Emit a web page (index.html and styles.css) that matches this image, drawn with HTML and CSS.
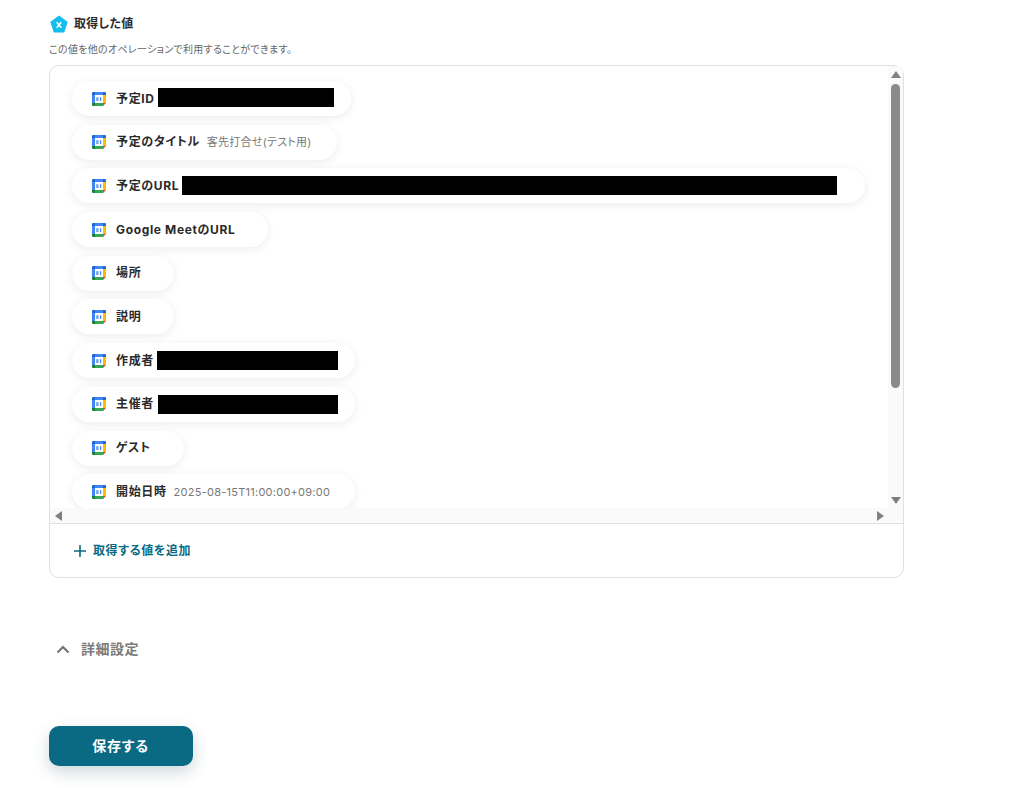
FILE: index.html
```html
<!DOCTYPE html>
<html lang="ja">
<head>
    <meta charset="UTF-8">
    <meta name="viewport" content="width=device-width, initial-scale=1.0">
    <title>取得した値</title>
    <link rel="stylesheet" href="styles.css">
</head>
<body>
    <svg class="icon-defs" width="0" height="0">
        <symbol id="gcal" viewBox="0 0 14 14">
            <rect x="3" y="3" width="8" height="8" fill="#fff"/>
            <path d="M3 0H1.200A1.200 1.200 0 0 0 0 1.200V3h3z" fill="#1967d2"/>
            <rect x="3" y="0" width="8" height="3" fill="#4285f4"/>
            <rect x="0" y="3" width="3" height="8" fill="#4285f4"/>
            <rect x="11" y="3" width="3" height="8" fill="#fbbc04"/>
            <rect x="3" y="11" width="8" height="3" fill="#34a853"/>
            <path d="M0 11v1.800A1.200 1.200 0 0 0 1.200 14H3v-3z" fill="#188038"/>
            <path d="M11 11v3l3-3z" fill="#ea4335"/>
            <path d="M11 0h1.800A1.200 1.200 0 0 1 14 1.200V3h-3z" fill="#1967d2"/>
            <rect x="4.200" y="5.200" width="2.300" height="3.800" fill="#6d9eeb"/>
            <rect x="8" y="5.200" width="1.200" height="3.800" fill="#4285f4"/>
        </symbol>
    </svg>

    <div class="page">
        <div class="heading">
            <svg class="heading-icon" width="18" height="18" viewBox="0 0 18 18">
                <path d="M9 .6 17.200 6.600a1 1 0 0 1 .3 1l-3 9.200a1 1 0 0 1-.9.6H4.400a1 1 0 0 1-.9-.6L.5 7.600a1 1 0 0 1 .3-1z" fill="#14bdeb"/>
                <path d="M6.700 7.300 11.300 12.700M11.300 7.300 6.700 12.700" stroke="#fff" stroke-width="1.500" fill="none"/>
            </svg>
            <span class="heading-text">取得した値</span>
        </div>
        <p class="subtext">この値を他のオペレーションで利用することができます。</p>

        <div class="card">
            <div class="scroll-box">
                <div class="scroll-row">
                    <div class="value-list">
                        <div class="pill">
                            <svg class="cal"><use href="#gcal"/></svg>
                            <span class="pill-label">予定ID</span>
                            <span class="mask mask-id"></span>
                        </div>
                        <div class="pill">
                            <svg class="cal"><use href="#gcal"/></svg>
                            <span class="pill-label">予定のタイトル</span>
                            <span class="pill-value">客先打合せ(テスト用)</span>
                        </div>
                        <div class="pill">
                            <svg class="cal"><use href="#gcal"/></svg>
                            <span class="pill-label">予定のURL</span>
                            <span class="mask mask-url"></span>
                        </div>
                        <div class="pill">
                            <svg class="cal"><use href="#gcal"/></svg>
                            <span class="pill-label">Google MeetのURL</span>
                        </div>
                        <div class="pill">
                            <svg class="cal"><use href="#gcal"/></svg>
                            <span class="pill-label">場所</span>
                        </div>
                        <div class="pill">
                            <svg class="cal"><use href="#gcal"/></svg>
                            <span class="pill-label">説明</span>
                        </div>
                        <div class="pill">
                            <svg class="cal"><use href="#gcal"/></svg>
                            <span class="pill-label">作成者</span>
                            <span class="mask mask-user"></span>
                        </div>
                        <div class="pill">
                            <svg class="cal"><use href="#gcal"/></svg>
                            <span class="pill-label">主催者</span>
                            <span class="mask mask-host"></span>
                        </div>
                        <div class="pill">
                            <svg class="cal"><use href="#gcal"/></svg>
                            <span class="pill-label">ゲスト</span>
                        </div>
                        <div class="pill">
                            <svg class="cal"><use href="#gcal"/></svg>
                            <span class="pill-label">開始日時</span>
                            <span class="pill-value">2025-08-15T11:00:00+09:00</span>
                        </div>
                    </div>
                    <div class="vbar">
                        <span class="arrow arrow-up"></span>
                        <span class="vthumb"></span>
                        <span class="arrow arrow-down"></span>
                    </div>
                </div>
                <div class="hbar">
                    <span class="arrow arrow-left"></span>
                    <span class="arrow arrow-right"></span>
                </div>
            </div>
            <div class="card-footer">
                <svg class="plus" width="12" height="12" viewBox="0 0 12 12">
                    <path d="M6 0v12M0 6h12" stroke="#0a6a83" stroke-width="1.600" fill="none"/>
                </svg>
                <span class="add-text">取得する値を追加</span>
            </div>
        </div>

        <div class="advanced">
            <svg class="chevron" width="14" height="9" viewBox="0 0 14 9">
                <path d="M1.500 7.500 7 2l5.500 5.500" stroke="#757575" stroke-width="2.200" fill="none"/>
            </svg>
            <span class="advanced-text">詳細設定</span>
        </div>

        <button type="button" class="save-button">保存する</button>
    </div>
</body>
</html>
```

FILE: styles.css
```css
html, body {
    margin: 0;
    padding: 0;
    height: 100%;
    overflow: hidden;
}
body {
    font-family: Inter, "Noto Sans CJK JP", sans-serif;
    font-feature-settings: "palt";
    background-color: #fff;
    color: #2a2a2a;
}
.icon-defs {
    display: block;
}
.page {
    padding: 14px 0 0 49px;
    width: 855px;
}
.heading {
    display: flex;
    align-items: center;
    gap: 6px;
    height: 20px;
    margin-left: 1px;
}
.heading-text {
    font-size: 12px;
    line-height: 18px;
    letter-spacing: 0.3px;
    font-weight: 700;
}
.subtext {
    margin: 8px 0 0 0;
    font-size: 10px;
    line-height: 14px;
    letter-spacing: 0.3px;
    color: #666;
}
.card {
    box-sizing: border-box;
    margin-top: 9px;
    height: 513px;
    border: 1px solid #e0e0e0;
    border-radius: 10px;
}
.scroll-box {
    display: flex;
    flex-direction: column;
    height: 457px;
    border-bottom: 1px solid #e0e0e0;
}
.scroll-row {
    flex: 1;
    min-height: 0;
    display: flex;
}
.value-list {
    flex: 1;
    min-width: 0;
    overflow: hidden;
    display: flex;
    flex-direction: column;
    align-items: flex-start;
    gap: 8.7px;
    padding: 15px 0 0 22px;
}
.pill {
    flex: none;
    box-sizing: border-box;
    display: flex;
    align-items: center;
    height: 35px;
    padding: 0 33px 0 20px;
    border-radius: 18px;
    background-color: #fff;
    box-shadow: 0 2px 10px rgba(0, 0, 0, 0.08);
}
.cal {
    flex: none;
    width: 14px;
    height: 14px;
    margin-right: 10px;
}
.pill-label {
    font-size: 12px;
    line-height: 18px;
    letter-spacing: 0.65px;
    font-weight: 700;
    white-space: nowrap;
}
.pill-value {
    margin: 0 -8px 0 7px;
    font-size: 11px;
    line-height: 16px;
    letter-spacing: 0.25px;
    color: #777;
    white-space: nowrap;
}
.mask {
    display: block;
    height: 19px;
    margin-left: 3px;
    background-color: #000;
}
.mask-id {
    width: 176px;
    margin-right: -16px;
    margin-bottom: 3px;
}
.mask-url {
    width: 655px;
    margin-right: -5px;
}
.mask-user {
    width: 181px;
    margin-right: -16px;
}
.mask-host {
    width: 180px;
    margin-left: 4px;
    margin-right: -16px;
}
.hbar {
    flex: none;
    display: flex;
    align-items: center;
    justify-content: space-between;
    height: 15px;
    padding: 0 19px 0 5px;
    background-color: #fafafa;
}
.vbar {
    flex: none;
    box-sizing: border-box;
    width: 15px;
    padding: 5px 0 4px;
    display: flex;
    flex-direction: column;
    align-items: center;
    background-color: #fafafa;
}
.vthumb {
    flex: none;
    width: 9px;
    height: 304px;
    margin: 6px 0 auto;
    border-radius: 5px;
    background-color: #8a8a8a;
}
.arrow {
    flex: none;
    width: 0;
    height: 0;
    border-style: solid;
    border-color: transparent;
}
.arrow-up {
    border-width: 0 5px 7px;
    border-bottom-color: #808080;
}
.arrow-down {
    border-width: 7px 5px 0;
    border-top-color: #808080;
}
.arrow-left {
    border-width: 5px 7px 5px 0;
    border-right-color: #808080;
}
.arrow-right {
    border-width: 5px 0 5px 7px;
    border-left-color: #808080;
}
.card-footer {
    display: flex;
    align-items: center;
    gap: 7px;
    height: 54px;
    padding-left: 24px;
}
.add-text {
    font-size: 12px;
    line-height: 18px;
    letter-spacing: 0.6px;
    font-weight: 700;
    color: #0a6a83;
}
.advanced {
    display: flex;
    align-items: center;
    gap: 12px;
    margin: 61px 0 0 7px;
    height: 20px;
}
.advanced-text {
    margin-left: -1px;
    font-size: 14px;
    line-height: 20px;
    letter-spacing: 0.5px;
    font-weight: 700;
    color: #7a7a7a;
}
.save-button {
    display: block;
    width: 144px;
    height: 40px;
    margin-top: 67px;
    padding: 0 1px 0 0;
    border: none;
    border-radius: 10px;
    background-color: #0a6a83;
    color: #fff;
    font-family: inherit;
    font-feature-settings: inherit;
    font-size: 14px;
    line-height: 20px;
    letter-spacing: 0.7px;
    font-weight: 700;
    box-shadow: 0 6px 16px rgba(10, 60, 80, 0.2);
}
```
